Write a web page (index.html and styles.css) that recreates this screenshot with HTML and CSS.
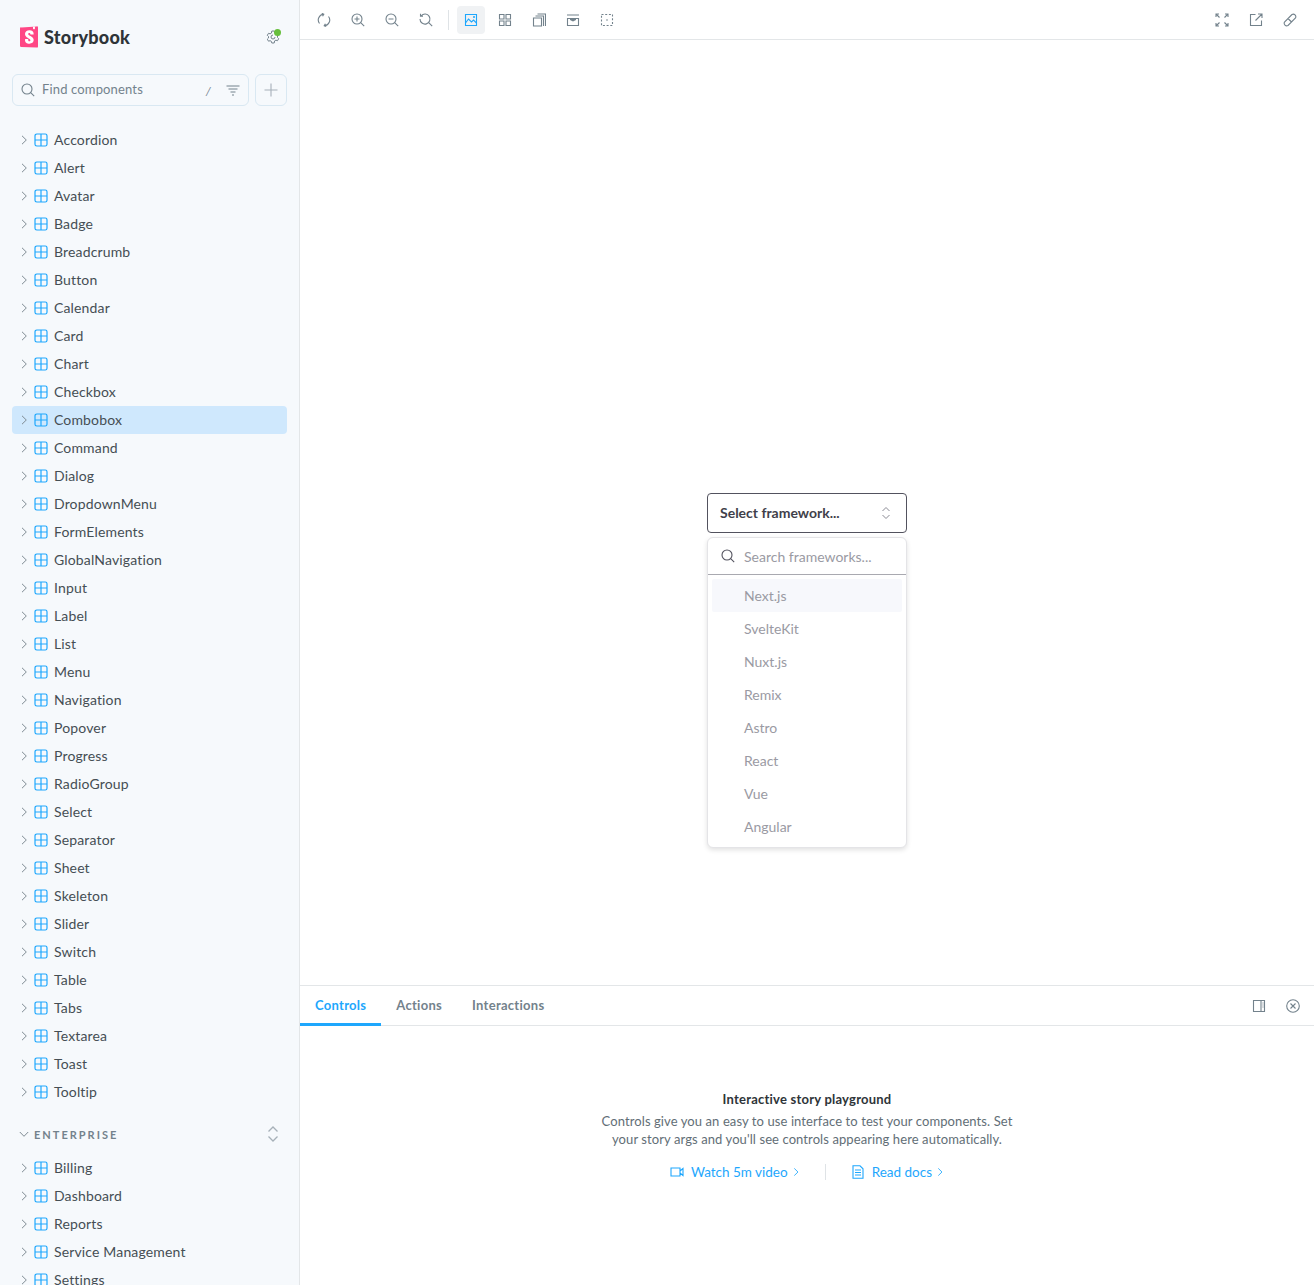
FILE: index.html
```html
<!DOCTYPE html>
<html lang="en">
<head>
<meta charset="UTF-8">
<meta name="viewport" content="width=device-width, initial-scale=1.0">
<title>Storybook</title>
<link rel="stylesheet" href="styles.css">
</head>

<body>
  <svg class="sprite" xmlns="http://www.w3.org/2000/svg">
    <symbol id="i-component" viewBox="0 0 14 14"><path d="M2.800 1h8.400A1.800 1.800 0 0 1 13 2.800v8.400a1.800 1.800 0 0 1-1.800 1.800H2.800A1.800 1.800 0 0 1 1 11.200V2.800A1.800 1.800 0 0 1 2.800 1ZM7 1v12M1 7h12" fill="none" stroke="currentColor" stroke-width="1.200"/></symbol>
    <symbol id="i-chevron" viewBox="0 0 14 14"><path d="M5 2.800 9.300 7 5 11.200" fill="none" stroke="currentColor" stroke-width="1"/></symbol>
    <symbol id="i-chevdown" viewBox="0 0 14 14"><path d="M2.800 5 7 9.300 11.200 5" fill="none" stroke="currentColor" stroke-width="1"/></symbol>
    <symbol id="i-updown" viewBox="0 0 14 14"><path d="M3.500 5 7 1.500 10.500 5M3.500 9 7 12.500 10.500 9" fill="none" stroke="currentColor" stroke-width="1"/></symbol>
    <symbol id="i-search" viewBox="0 0 14 14"><circle cx="6" cy="6" r="5" fill="none" stroke="currentColor" stroke-width="1.100"/><path d="m9.700 9.700 3.500 3.500" fill="none" stroke="currentColor" stroke-width="1.100"/></symbol>
    <symbol id="i-filter" viewBox="0 0 14 14"><path d="M.5 3h13M2.500 6h9M4.500 9h5M6 12h2" fill="none" stroke="currentColor" stroke-width="1"/></symbol>
    <symbol id="i-plus" viewBox="0 0 14 14"><path d="M7 .5v13M.5 7h13" fill="none" stroke="currentColor" stroke-width="1.100"/></symbol>
    <symbol id="i-gear" viewBox="0 0 14 14"><path d="M5.800 1h2.400l.4 1.600 1.300.7 1.600-.5 1.200 2-1.200 1.200v1.500l1.200 1.200-1.200 2-1.600-.5-1.300.7L8.200 13H5.800l-.4-1.600-1.300-.7-1.600.5-1.200-2 1.200-1.200V6.500L1.300 5.300l1.200-2 1.600.5 1.300-.7Z" fill="none" stroke="currentColor" stroke-width="1"/><path d="M9 7a2 2 0 1 1-2-2" fill="none" stroke="currentColor" stroke-width="1"/></symbol>
    <symbol id="i-sync" viewBox="0 0 14 14"><path d="M2.500 10.500A5.700 5.700 0 0 1 6.500 1.300M4.800 .3l2 1-1.200 2M11.500 3.500a5.700 5.700 0 0 1-4 9.200M9.200 13.700l-2-1 1.200-2" fill="none" stroke="currentColor" stroke-width="1.100"/></symbol>
    <symbol id="i-zoomin" viewBox="0 0 14 14"><circle cx="6" cy="6" r="5" fill="none" stroke="currentColor" stroke-width="1.100"/><path d="m9.700 9.700 3.500 3.500M3.500 6h5M6 3.500v5" fill="none" stroke="currentColor" stroke-width="1.100"/></symbol>
    <symbol id="i-zoomout" viewBox="0 0 14 14"><circle cx="6" cy="6" r="5" fill="none" stroke="currentColor" stroke-width="1.100"/><path d="m9.700 9.700 3.500 3.500M3.500 6h5" fill="none" stroke="currentColor" stroke-width="1.100"/></symbol>
    <symbol id="i-zoomreset" viewBox="0 0 14 14"><path d="M2.200 2.800A5 5 0 1 1 1 6M1.500 .8v2.500H4M9.700 9.700l3.500 3.500" fill="none" stroke="currentColor" stroke-width="1.100"/></symbol>
    <symbol id="i-photo" viewBox="0 0 14 14"><path d="M1.500 1.500h11v11h-11Z" fill="none" stroke="currentColor" stroke-width="1.100"/><path d="m1.500 10 3-4 3 3 2-2 3 3" fill="none" stroke="currentColor" stroke-width="1.100"/><circle cx="10" cy="4" r="1" fill="currentColor"/></symbol>
    <symbol id="i-grid" viewBox="0 0 14 14"><path d="M1.500 1.500h4.500v4.500H1.500ZM8 1.500h4.500v4.500H8ZM1.500 8h4.500v4.500H1.500ZM8 8h4.500v4.500H8Z" fill="none" stroke="currentColor" stroke-width="1.100"/></symbol>
    <symbol id="i-outline" viewBox="0 0 14 14"><path d="M1.500 5h8v8h-8ZM3.500 3h8v10M5.500 1h8v12" fill="none" stroke="currentColor" stroke-width="1.100"/></symbol>
    <symbol id="i-ruler" viewBox="0 0 14 14"><path d="M1 2h12M1.500 5.500h11v7h-11Z" fill="none" stroke="currentColor" stroke-width="1.100"/><path d="M4 5.500h6v1.500l-3 1.500L4 7Z" fill="currentColor"/></symbol>
    <symbol id="i-measure" viewBox="0 0 14 14"><path d="M1.500 1.500h11v11h-11Z" fill="none" stroke="currentColor" stroke-width="1.100" stroke-dasharray="2 1.700"/><circle cx="7" cy="7" r=".8" fill="currentColor"/></symbol>
    <symbol id="i-expand" viewBox="0 0 14 14"><path d="M1.500 1.500l3 3M12.500 1.500l-3 3M1.500 12.500l3-3M12.500 12.500l-3-3M1 4V1h3M10 1h3v3M1 10v3h3M13 10v3h-3" fill="none" stroke="currentColor" stroke-width="1.100"/></symbol>
    <symbol id="i-share" viewBox="0 0 14 14"><path d="M6.500 1.500h-5v11h11v-5M9 1h4v4M13 1 6.500 7.500" fill="none" stroke="currentColor" stroke-width="1.100"/></symbol>
    <symbol id="i-link" viewBox="0 0 14 14"><path d="m8 2.500 1-1a2.600 2.600 0 0 1 3.500 3.500l-7.500 7.500A2.600 2.600 0 0 1 1.500 9ZM5 5.500l3.500 3.500" fill="none" stroke="currentColor" stroke-width="1.100"/></symbol>
    <symbol id="i-sidebar" viewBox="0 0 14 14"><path d="M1.500 1.500h11v11h-11ZM9 1.500v11" fill="none" stroke="currentColor" stroke-width="1.100"/><path d="M10.500 4h1M10.500 6h1M10.500 8h1" fill="none" stroke="currentColor" stroke-width="1"/></symbol>
    <symbol id="i-close" viewBox="0 0 14 14"><circle cx="7" cy="7" r="6.300" fill="none" stroke="currentColor" stroke-width="1.100"/><path d="m4.500 4.500 5 5M9.500 4.500l-5 5" fill="none" stroke="currentColor" stroke-width="1.100"/></symbol>
    <symbol id="i-video" viewBox="0 0 14 14"><path d="M1 3h9v8H1ZM10 6l3-2.500v7L10 8" fill="none" stroke="currentColor" stroke-width="1.100"/></symbol>
    <symbol id="i-doc" viewBox="0 0 14 14"><path d="M2 .8h7l3 3v9.400H2ZM4 5h6M4 7.500h6M4 10h6" fill="none" stroke="currentColor" stroke-width="1.100"/></symbol>
  </svg>

  <div class="app">
    <aside class="sidebar">
      <div class="brand">
        <div class="logo">
          <svg class="logo-mark" viewBox="0 0 18 22"><path d="M1.500 1.400 16.500.4A1.200 1.200 0 0 1 18 1.600v18.800a1.200 1.200 0 0 1-1.300 1.200L1.200 21A1.200 1.200 0 0 1 0 19.800V2.600a1.200 1.200 0 0 1 1.500-1.200Z" fill="#ff4785"/><path d="m13 .8.100 2.700.9-.7.900.6V.6Z" fill="#fff"/><path d="M10.500 8.400c0 .4 2.800.2 3.200-.1 0-2.700-1.500-4.100-4.200-4.100S5 5.700 5 8c0 4 5.400 4.100 5.400 6.300 0 .6-.3 1-1 1-.9 0-1.200-.5-1.200-2.100 0-.4-3.100-.4-3.200 0-.2 3.500 1.900 4.500 4.400 4.500 2.400 0 4.300-1.300 4.300-3.600 0-4.200-5.500-4.100-5.500-6.200 0-.8.600-1 1-1 .5 0 1.200.1 1.300 1.500Z" fill="#fff"/></svg>
          <span class="logo-text">Storybook</span>
        </div>
        <div class="gear">
          <svg class="icon"><use href="#i-gear"/></svg>
          <span class="gear-dot"></span>
        </div>
      </div>

      <div class="search-row">
        <div class="search-box">
          <svg class="icon"><use href="#i-search"/></svg>
          <span class="search-text">Find components</span>
          <span class="search-key">/</span>
          <svg class="icon"><use href="#i-filter"/></svg>
        </div>
        <div class="add-btn"><svg class="icon"><use href="#i-plus"/></svg></div>
      </div>

      <ul class="tree">
        <li class="tree-row"><svg class="chev"><use href="#i-chevron"/></svg><svg class="comp"><use href="#i-component"/></svg>Accordion</li>
        <li class="tree-row"><svg class="chev"><use href="#i-chevron"/></svg><svg class="comp"><use href="#i-component"/></svg>Alert</li>
        <li class="tree-row"><svg class="chev"><use href="#i-chevron"/></svg><svg class="comp"><use href="#i-component"/></svg>Avatar</li>
        <li class="tree-row"><svg class="chev"><use href="#i-chevron"/></svg><svg class="comp"><use href="#i-component"/></svg>Badge</li>
        <li class="tree-row"><svg class="chev"><use href="#i-chevron"/></svg><svg class="comp"><use href="#i-component"/></svg>Breadcrumb</li>
        <li class="tree-row"><svg class="chev"><use href="#i-chevron"/></svg><svg class="comp"><use href="#i-component"/></svg>Button</li>
        <li class="tree-row"><svg class="chev"><use href="#i-chevron"/></svg><svg class="comp"><use href="#i-component"/></svg>Calendar</li>
        <li class="tree-row"><svg class="chev"><use href="#i-chevron"/></svg><svg class="comp"><use href="#i-component"/></svg>Card</li>
        <li class="tree-row"><svg class="chev"><use href="#i-chevron"/></svg><svg class="comp"><use href="#i-component"/></svg>Chart</li>
        <li class="tree-row"><svg class="chev"><use href="#i-chevron"/></svg><svg class="comp"><use href="#i-component"/></svg>Checkbox</li>
        <li class="tree-row selected"><svg class="chev"><use href="#i-chevron"/></svg><svg class="comp"><use href="#i-component"/></svg>Combobox</li>
        <li class="tree-row"><svg class="chev"><use href="#i-chevron"/></svg><svg class="comp"><use href="#i-component"/></svg>Command</li>
        <li class="tree-row"><svg class="chev"><use href="#i-chevron"/></svg><svg class="comp"><use href="#i-component"/></svg>Dialog</li>
        <li class="tree-row"><svg class="chev"><use href="#i-chevron"/></svg><svg class="comp"><use href="#i-component"/></svg>DropdownMenu</li>
        <li class="tree-row"><svg class="chev"><use href="#i-chevron"/></svg><svg class="comp"><use href="#i-component"/></svg>FormElements</li>
        <li class="tree-row"><svg class="chev"><use href="#i-chevron"/></svg><svg class="comp"><use href="#i-component"/></svg>GlobalNavigation</li>
        <li class="tree-row"><svg class="chev"><use href="#i-chevron"/></svg><svg class="comp"><use href="#i-component"/></svg>Input</li>
        <li class="tree-row"><svg class="chev"><use href="#i-chevron"/></svg><svg class="comp"><use href="#i-component"/></svg>Label</li>
        <li class="tree-row"><svg class="chev"><use href="#i-chevron"/></svg><svg class="comp"><use href="#i-component"/></svg>List</li>
        <li class="tree-row"><svg class="chev"><use href="#i-chevron"/></svg><svg class="comp"><use href="#i-component"/></svg>Menu</li>
        <li class="tree-row"><svg class="chev"><use href="#i-chevron"/></svg><svg class="comp"><use href="#i-component"/></svg>Navigation</li>
        <li class="tree-row"><svg class="chev"><use href="#i-chevron"/></svg><svg class="comp"><use href="#i-component"/></svg>Popover</li>
        <li class="tree-row"><svg class="chev"><use href="#i-chevron"/></svg><svg class="comp"><use href="#i-component"/></svg>Progress</li>
        <li class="tree-row"><svg class="chev"><use href="#i-chevron"/></svg><svg class="comp"><use href="#i-component"/></svg>RadioGroup</li>
        <li class="tree-row"><svg class="chev"><use href="#i-chevron"/></svg><svg class="comp"><use href="#i-component"/></svg>Select</li>
        <li class="tree-row"><svg class="chev"><use href="#i-chevron"/></svg><svg class="comp"><use href="#i-component"/></svg>Separator</li>
        <li class="tree-row"><svg class="chev"><use href="#i-chevron"/></svg><svg class="comp"><use href="#i-component"/></svg>Sheet</li>
        <li class="tree-row"><svg class="chev"><use href="#i-chevron"/></svg><svg class="comp"><use href="#i-component"/></svg>Skeleton</li>
        <li class="tree-row"><svg class="chev"><use href="#i-chevron"/></svg><svg class="comp"><use href="#i-component"/></svg>Slider</li>
        <li class="tree-row"><svg class="chev"><use href="#i-chevron"/></svg><svg class="comp"><use href="#i-component"/></svg>Switch</li>
        <li class="tree-row"><svg class="chev"><use href="#i-chevron"/></svg><svg class="comp"><use href="#i-component"/></svg>Table</li>
        <li class="tree-row"><svg class="chev"><use href="#i-chevron"/></svg><svg class="comp"><use href="#i-component"/></svg>Tabs</li>
        <li class="tree-row"><svg class="chev"><use href="#i-chevron"/></svg><svg class="comp"><use href="#i-component"/></svg>Textarea</li>
        <li class="tree-row"><svg class="chev"><use href="#i-chevron"/></svg><svg class="comp"><use href="#i-component"/></svg>Toast</li>
        <li class="tree-row"><svg class="chev"><use href="#i-chevron"/></svg><svg class="comp"><use href="#i-component"/></svg>Tooltip</li>
      </ul>

      <div class="group-head">
        <svg class="chev"><use href="#i-chevdown"/></svg>
        <span class="group-name">ENTERPRISE</span>
        <svg class="group-toggle"><use href="#i-updown"/></svg>
      </div>

      <ul class="tree">
        <li class="tree-row"><svg class="chev"><use href="#i-chevron"/></svg><svg class="comp"><use href="#i-component"/></svg>Billing</li>
        <li class="tree-row"><svg class="chev"><use href="#i-chevron"/></svg><svg class="comp"><use href="#i-component"/></svg>Dashboard</li>
        <li class="tree-row"><svg class="chev"><use href="#i-chevron"/></svg><svg class="comp"><use href="#i-component"/></svg>Reports</li>
        <li class="tree-row"><svg class="chev"><use href="#i-chevron"/></svg><svg class="comp"><use href="#i-component"/></svg>Service Management</li>
        <li class="tree-row"><svg class="chev"><use href="#i-chevron"/></svg><svg class="comp"><use href="#i-component"/></svg>Settings</li>
      </ul>
    </aside>

    <main class="main">
      <div class="toolbar">
        <div class="tool"><svg class="icon"><use href="#i-sync"/></svg></div>
        <div class="tool"><svg class="icon"><use href="#i-zoomin"/></svg></div>
        <div class="tool"><svg class="icon"><use href="#i-zoomout"/></svg></div>
        <div class="tool"><svg class="icon"><use href="#i-zoomreset"/></svg></div>
        <span class="tool-sep"></span>
        <div class="tool active"><svg class="icon"><use href="#i-photo"/></svg></div>
        <div class="tool"><svg class="icon"><use href="#i-grid"/></svg></div>
        <div class="tool"><svg class="icon"><use href="#i-outline"/></svg></div>
        <div class="tool"><svg class="icon"><use href="#i-ruler"/></svg></div>
        <div class="tool"><svg class="icon"><use href="#i-measure"/></svg></div>
        <div class="tool push"><svg class="icon"><use href="#i-expand"/></svg></div>
        <div class="tool"><svg class="icon"><use href="#i-share"/></svg></div>
        <div class="tool"><svg class="icon"><use href="#i-link"/></svg></div>
      </div>

      <div class="preview">
        <div class="combo">
          <div class="combo-btn">
            <span>Select framework...</span>
            <svg class="combo-arrows"><use href="#i-updown"/></svg>
          </div>
          <div class="combo-pop">
            <div class="combo-search">
              <svg class="combo-glass"><use href="#i-search"/></svg>
              <span>Search frameworks...</span>
            </div>
            <ul class="combo-list">
              <li class="combo-item hover">Next.js</li>
              <li class="combo-item">SvelteKit</li>
              <li class="combo-item">Nuxt.js</li>
              <li class="combo-item">Remix</li>
              <li class="combo-item">Astro</li>
              <li class="combo-item">React</li>
              <li class="combo-item">Vue</li>
              <li class="combo-item">Angular</li>
            </ul>
          </div>
        </div>
      </div>

      <section class="panel">
        <div class="tabs">
          <span class="tab on">Controls</span>
          <span class="tab">Actions</span>
          <span class="tab">Interactions</span>
          <div class="tool push"><svg class="icon"><use href="#i-sidebar"/></svg></div>
          <div class="tool"><svg class="icon"><use href="#i-close"/></svg></div>
        </div>
        <div class="empty">
          <h2 class="empty-title">Interactive story playground</h2>
          <p class="empty-text">Controls give you an easy to use interface to test your components. Set your story args and you'll see controls appearing here automatically.</p>
          <div class="empty-links">
            <a class="doc-link"><svg class="icon"><use href="#i-video"/></svg><span>Watch 5m video</span><svg class="mini"><use href="#i-chevron"/></svg></a>
            <span class="link-sep"></span>
            <a class="doc-link"><svg class="icon"><use href="#i-doc"/></svg><span>Read docs</span><svg class="mini"><use href="#i-chevron"/></svg></a>
          </div>
        </div>
      </section>
    </main>
  </div>
</body>
</html>
```

FILE: styles.css
```css
* {
  box-sizing: border-box;
  margin: 0;
  padding: 0;
}

body {
  font-family: Lato, "Noto Sans", sans-serif;
  font-size: 14px;
  letter-spacing: 0.15px;
  color: #2e3438;
  background: #fff;
  height: 1285px;
  overflow: hidden;
}

ul {
  list-style: none;
}

.sprite {
  display: none;
}

.icon {
  width: 14px;
  height: 14px;
  flex: none;
}

.app {
  display: flex;
  height: 1285px;
}

/* sidebar */
.sidebar {
  width: 300px;
  flex: none;
  height: 1285px;
  overflow: hidden;
  background: #f6f9fc;
  border-right: 1px solid #e3e6e8;
  padding: 0 12px;
}

.brand {
  display: flex;
  align-items: center;
  justify-content: space-between;
  height: 74px;
  padding: 0 7px 0 8px;
}

.logo {
  display: flex;
  align-items: center;
  gap: 6px;
}

.logo-mark {
  width: 18px;
  height: 22px;
}

.logo-text {
  font-size: 18px;
  font-weight: 900;
  letter-spacing: 0.25px;
  color: #2e3438;
}

.gear {
  position: relative;
  width: 14px;
  height: 14px;
  color: #73828c;
}

.gear-dot {
  position: absolute;
  top: -1px;
  right: -1px;
  width: 7px;
  height: 7px;
  border-radius: 50%;
  background: #66bf3c;
}

.search-row {
  display: flex;
  gap: 6px;
  margin-bottom: 20px;
}

.search-box {
  flex: 1;
  height: 32px;
  display: flex;
  align-items: center;
  gap: 7px;
  padding: 0 8px;
  border: 1px solid #d9e8f2;
  border-radius: 6px;
  color: #73828c;
}

.search-text {
  flex: 1;
  font-size: 13px;
  padding-bottom: 2px;
}

.search-key {
  margin-right: 8px;
  font-size: 12px;
  font-style: italic;
}

.add-btn {
  width: 32px;
  height: 32px;
  display: flex;
  align-items: center;
  justify-content: center;
  border: 1px solid #d9e8f2;
  border-radius: 6px;
  color: #a6b0b8;
}

.tree-row {
  display: flex;
  align-items: center;
  height: 28px;
  border-radius: 4px;
  padding: 0 0 2px 5px;
  color: #454e54;
}

.tree-row.selected {
  background: #cfe8fd;
}

.chev {
  width: 14px;
  height: 14px;
  flex: none;
  margin-top: 2px;
  color: #7f8b93;
}

.comp {
  width: 14px;
  height: 14px;
  flex: none;
  margin: 2px 6px 0 3px;
  color: #1ea7fd;
}

.group-head {
  display: flex;
  align-items: center;
  height: 48px;
  padding: 8px 0 0 5px;
}

.group-head .chev {
  margin-top: 0;
}

.group-name {
  flex: 1;
  margin-left: 3px;
  font-size: 11px;
  font-weight: 700;
  letter-spacing: 2px;
  color: #73828c;
}

.group-toggle {
  width: 18px;
  height: 18px;
  margin-right: 5px;
  color: #a6b0b8;
}

/* main */
.main {
  flex: 1;
  min-width: 0;
  height: 1285px;
  display: flex;
  flex-direction: column;
}

.toolbar {
  height: 40px;
  flex: none;
  display: flex;
  align-items: center;
  padding: 0 10px;
  gap: 6px;
  border-bottom: 1px solid #e3e6e8;
}

.tool {
  width: 28px;
  height: 28px;
  flex: none;
  display: flex;
  align-items: center;
  justify-content: center;
  border-radius: 4px;
  color: #73828c;
}

.tool.active {
  background: #f0f2f4;
  color: #1ea7fd;
}

.tool.push {
  margin-left: auto;
}

.tool-sep {
  width: 1px;
  height: 20px;
  margin: 0 2px;
  background: #dfe3e6;
}

.preview {
  flex: 1;
  display: flex;
  justify-content: center;
  padding-top: 453px;
}

.combo {
  width: 200px;
  letter-spacing: 0;
}

.combo-btn {
  height: 40px;
  display: flex;
  align-items: center;
  justify-content: space-between;
  padding: 0 13px 2px 12px;
  border: 1px solid #52525e;
  border-radius: 4px;
  font-weight: 700;
  color: #3f3f4a;
}

.combo-arrows {
  width: 14px;
  height: 14px;
  margin-top: 2px;
  color: #8a8a94;
}

.combo-pop {
  margin-top: 4px;
  height: 311px;
  border: 1px solid #e4e4e7;
  border-radius: 6px;
  box-shadow: 0 2px 5px rgba(0, 0, 0, 0.12);
  background: #fff;
}

.combo-search {
  height: 37px;
  display: flex;
  align-items: center;
  gap: 9px;
  padding-left: 13px;
  border-bottom: 1px solid #a9a9b0;
  color: #9a9aa3;
}

.combo-glass {
  width: 14px;
  height: 14px;
  color: #52525e;
}

.combo-list {
  padding: 4px;
}

.combo-item {
  height: 33px;
  display: flex;
  align-items: center;
  padding-left: 32px;
  border-radius: 2px;
  color: #9a9aa3;
}

.combo-item.hover {
  background: #f7f8fc;
}

/* addons panel */
.panel {
  height: 300px;
  flex: none;
  border-top: 1px solid #e3e6e8;
}

.tabs {
  height: 40px;
  display: flex;
  align-items: center;
  padding-right: 7px;
  border-bottom: 1px solid #e3e6e8;
}

.tabs .tool + .tool {
  margin-left: 6px;
}

.tab {
  height: 40px;
  display: flex;
  align-items: center;
  padding: 0 15px 2px;
  font-size: 13px;
  font-weight: 700;
  letter-spacing: 0.28px;
  color: #73828c;
}

.tab.on {
  color: #1ea7fd;
  border-bottom: 3px solid #1ea7fd;
  padding-bottom: 0;
  padding-top: 1px;
}

.empty {
  display: flex;
  flex-direction: column;
  align-items: center;
  padding-top: 64px;
}

.empty-title {
  font-size: 13px;
  font-weight: 700;
  letter-spacing: 0.23px;
  line-height: 18px;
  color: #2e3438;
}

.empty-text {
  width: 430px;
  margin-top: 4px;
  font-size: 13px;
  letter-spacing: 0.09px;
  line-height: 18px;
  text-align: center;
  color: #626e76;
}

.empty-links {
  display: flex;
  align-items: center;
  gap: 25px;
  margin-top: 16px;
}

.doc-link {
  display: flex;
  align-items: center;
  gap: 7px;
  font-size: 13.5px;
  letter-spacing: 0;
  color: #1ea7fd;
}

.doc-link .mini {
  width: 12px;
  height: 12px;
  margin: 0 -2px 0 -5px;
}

.link-sep {
  width: 1px;
  height: 16px;
  background: #dfe3e6;
}
```
